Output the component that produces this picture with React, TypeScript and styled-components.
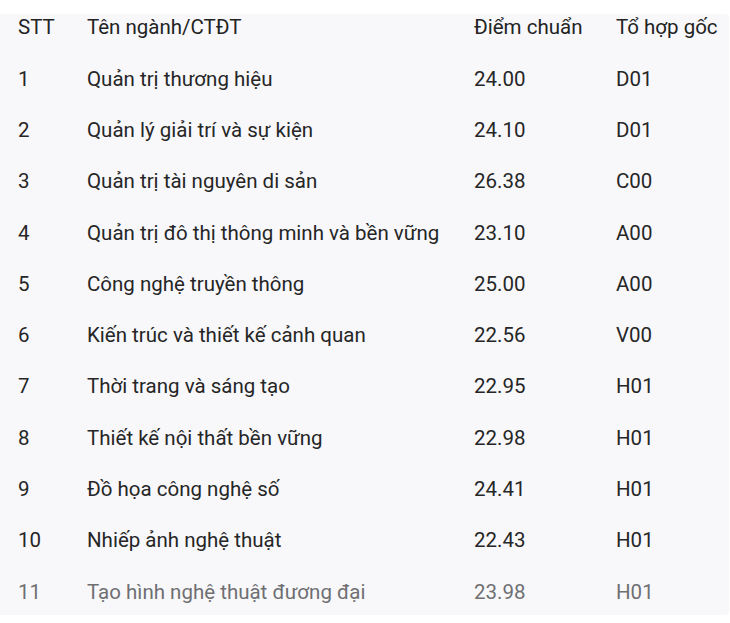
import React from "react";
import styled, { createGlobalStyle } from "styled-components";

const GlobalStyle = createGlobalStyle`
  html, body {
    margin: 0;
    padding: 0;
    background: #ffffff;
  }
  body {
    font-family: Roboto, "Noto Sans", sans-serif;
    color: #1f1f1f;
  }
`;

interface Major {
  id: number;
  name: string;
  score: string;
  combo: string;
}

const majors: Major[] = [
  { id: 1, name: "Quản trị thương hiệu", score: "24.00", combo: "D01" },
  { id: 2, name: "Quản lý giải trí và sự kiện", score: "24.10", combo: "D01" },
  { id: 3, name: "Quản trị tài nguyên di sản", score: "26.38", combo: "C00" },
  { id: 4, name: "Quản trị đô thị thông minh và bền vững", score: "23.10", combo: "A00" },
  { id: 5, name: "Công nghệ truyền thông", score: "25.00", combo: "A00" },
  { id: 6, name: "Kiến trúc và thiết kế cảnh quan", score: "22.56", combo: "V00" },
  { id: 7, name: "Thời trang và sáng tạo", score: "22.95", combo: "H01" },
  { id: 8, name: "Thiết kế nội thất bền vững", score: "22.98", combo: "H01" },
  { id: 9, name: "Đồ họa công nghệ số", score: "24.41", combo: "H01" },
  { id: 10, name: "Nhiếp ảnh nghệ thuật", score: "22.43", combo: "H01" },
  { id: 11, name: "Tạo hình nghệ thuật đương đại", score: "23.98", combo: "H01" },
];

export default function App() {
  return (
    <>
      <GlobalStyle />
      <Page>
        <Panel>
          <HeaderRow>
            <Cell>STT</Cell>
            <Cell>Tên ngành/CTĐT</Cell>
            <Cell>Điểm chuẩn</Cell>
            <Cell>Tổ hợp gốc</Cell>
          </HeaderRow>
          {majors.map((m, i) => (
            <Row key={m.id} $faded={i === majors.length - 1}>
              <Cell>{m.id}</Cell>
              <Cell>{m.name}</Cell>
              <Cell>{m.score}</Cell>
              <Cell>{m.combo}</Cell>
            </Row>
          ))}
        </Panel>
      </Page>
    </>
  );
}

const Page = styled.div`
  width: 730px;
  height: 623px;
  padding-top: 14px;
  box-sizing: border-box;
  overflow: hidden;
`;

const Panel = styled.div`
  width: 729px;
  height: 601px;
  background: #f8f8fb;
  border-radius: 0 4px 4px 0;
  overflow: hidden;
`;

const Grid = styled.div`
  display: grid;
  grid-template-columns: 69px 387px 142px 1fr;
  padding-left: 18px;
  font-size: 20.5px;
  align-items: center;
`;

const HeaderRow = styled(Grid)`
  height: 39px;
  align-items: start;
  line-height: 27px;
  color: #232323;
`;

const Row = styled(Grid)<{ $faded?: boolean }>`
  height: 51.3px;
  color: ${(p) => (p.$faded ? "#6f6f72" : "#262626")};
`;

const Cell = styled.div`
  white-space: nowrap;
`;
